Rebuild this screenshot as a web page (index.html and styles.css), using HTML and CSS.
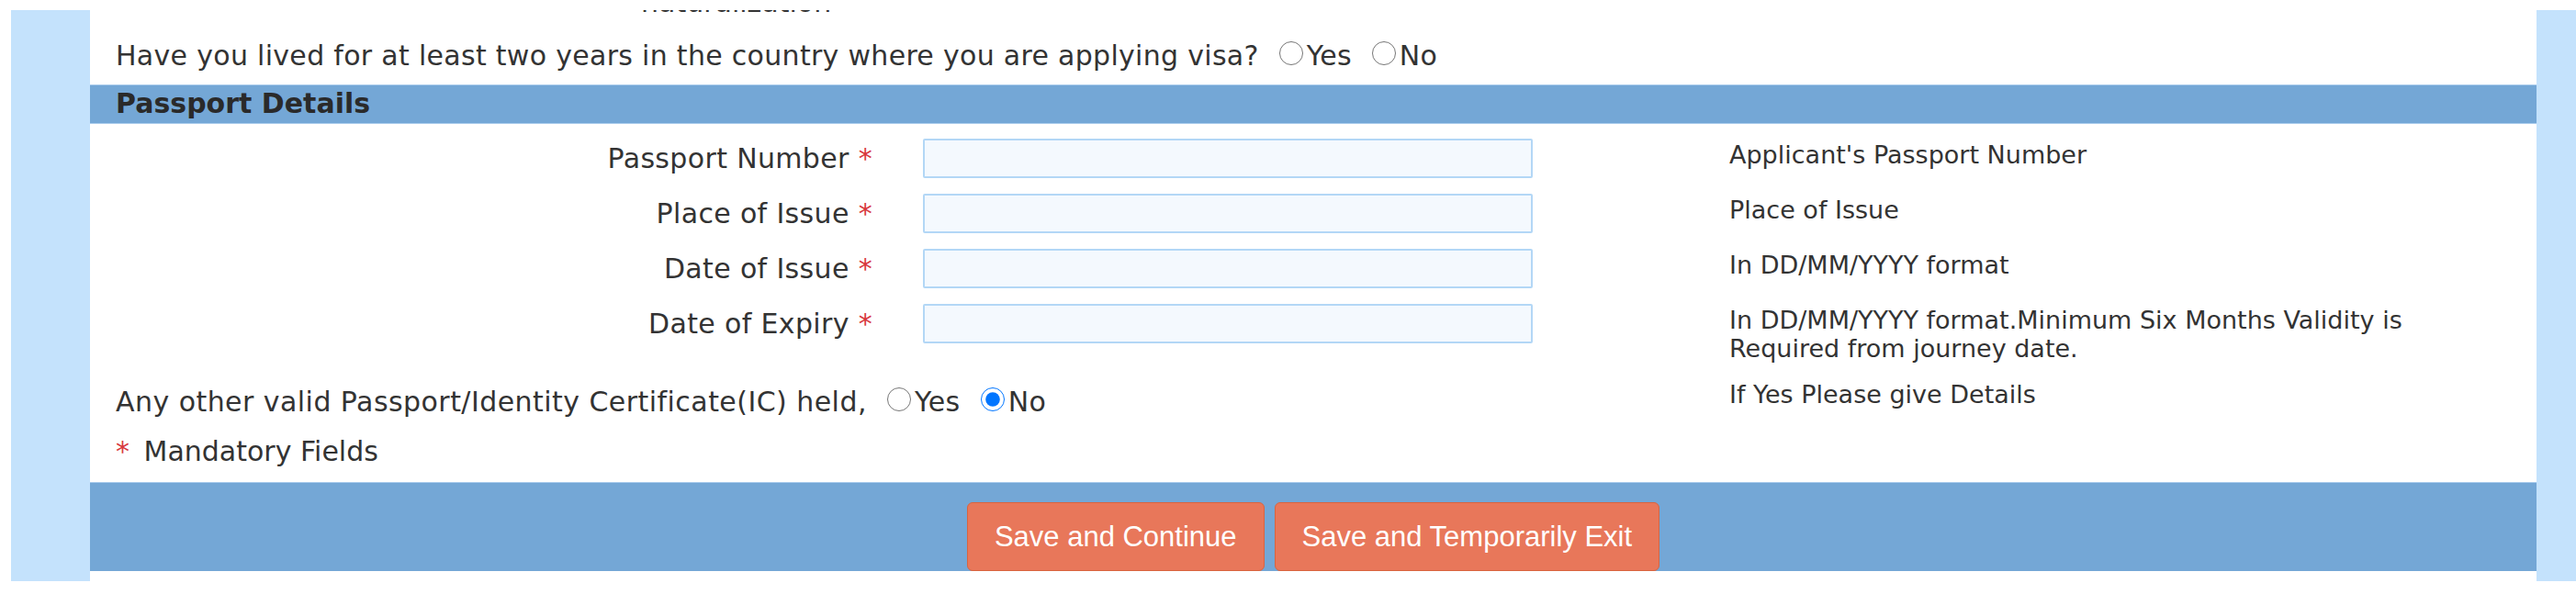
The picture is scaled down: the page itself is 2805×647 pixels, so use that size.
FILE: index.html
```html
<!DOCTYPE html>
<html lang="en">
<head>
<meta charset="utf-8">
<title>Passport Details</title>
<link rel="stylesheet" href="styles.css">
</head>
<body>
<div class="page">
  <div class="content">
    <div class="cut"><span>naturalization</span></div>
    <p class="q">Have you lived for at least two years in the country where you are applying visa? <input type="radio" name="lived">Yes <input type="radio" name="lived">No</p>
    <div class="bar">Passport Details</div>
    <div class="form">
      <label class="lbl">Passport Number <span class="req">*</span></label>
      <div class="fld"><input type="text" class="txt"></div>
      <div class="hint">Applicant's Passport Number</div>

      <label class="lbl">Place of Issue <span class="req">*</span></label>
      <div class="fld"><input type="text" class="txt"></div>
      <div class="hint">Place of Issue</div>

      <label class="lbl">Date of Issue <span class="req">*</span></label>
      <div class="fld"><input type="text" class="txt"></div>
      <div class="hint">In DD/MM/YYYY format</div>

      <label class="lbl">Date of Expiry <span class="req">*</span></label>
      <div class="fld"><input type="text" class="txt"></div>
      <div class="hint">In DD/MM/YYYY format.Minimum Six Months Validity is Required from journey date.</div>

      <div class="other">Any other valid Passport/Identity Certificate(IC) held, <input type="radio" name="other">Yes <input type="radio" name="other" checked>No</div>
      <div class="hint">If Yes Please give Details</div>
    </div>
    <p class="mand"><span class="req star">*</span> Mandatory Fields</p>
    <div class="footer">
      <button type="button" class="btn">Save and Continue</button>
      <button type="button" class="btn">Save and Temporarily Exit</button>
    </div>
  </div>
</div>
</body>
</html>
```
FILE: styles.css
```css
* { box-sizing: border-box; }

html, body { background: #ffffff; }

body {
  margin: 0;
  font-family: "DejaVu Sans", Verdana, sans-serif;
  color: #333333;
}

.page {
  margin: 11px 0 0 12px;
  padding: 0 43px 0 86px;
  background: #c4e2fc;
}

.content {
  background: #ffffff;
  padding-bottom: 11px;
}

.cut {
  height: 2px;
  overflow: hidden;
}

.cut span {
  display: block;
  margin: -26px 0 0 600px;
  font-size: 30px;
  line-height: 35px;
}

.q {
  margin: 0;
  padding: 30px 28px 0;
  font-size: 30px;
  line-height: 35px;
  letter-spacing: 0.3px;
}

input[type="radio"] {
  width: 26px;
  height: 26px;
  margin: 0 4px 0 12px;
  vertical-align: baseline;
}

.bar {
  margin-top: 14px;
  background: #74a7d6;
  border-top: 1px solid #a9cbec;
  border-bottom: 1px solid #a9cbec;
  padding: 2px 28px 4px;
  font-weight: bold;
  font-size: 30px;
  line-height: 35px;
  color: #2a2a2a;
}

.form {
  display: grid;
  grid-template-columns: 907px 878px 1fr;
  row-gap: 17px;
  padding-top: 16px;
  align-items: start;
}

.lbl {
  padding: 4px 55px 0 0;
  text-align: right;
  font-size: 30px;
  line-height: 35px;
  letter-spacing: 0.35px;
}

.req {
  color: #d8383e;
}

.fld {
  display: flex;
}

.txt {
  width: 664px;
  height: 43px;
  margin: 0;
  border: 2px solid #b3d7f6;
  border-radius: 2px;
  background: #f4f9fe;
  font: inherit;
}

.hint {
  max-width: 790px;
  padding-top: 2px;
  font-size: 27px;
  line-height: 31px;
}

.other {
  grid-column: 1 / span 2;
  padding: 8px 28px 0;
  font-size: 30px;
  line-height: 35px;
  letter-spacing: 0.45px;
}

.mand {
  margin: 0;
  padding: 19px 28px 0;
  font-size: 30px;
  line-height: 35px;
}

.star {
  margin-right: 6px;
}

.footer {
  margin-top: 16px;
  background: #74a7d6;
  border-top: 1px solid #a9cbec;
  padding-top: 21px;
  display: flex;
  justify-content: center;
  gap: 11px;
}

.btn {
  height: 75px;
  padding: 0 29px;
  font-family: "Liberation Sans", Arial, sans-serif;
  font-size: 31px;
  color: #ffffff;
  background: #e8775a;
  border: 1px solid #d9643f;
  border-radius: 6px;
}
```
